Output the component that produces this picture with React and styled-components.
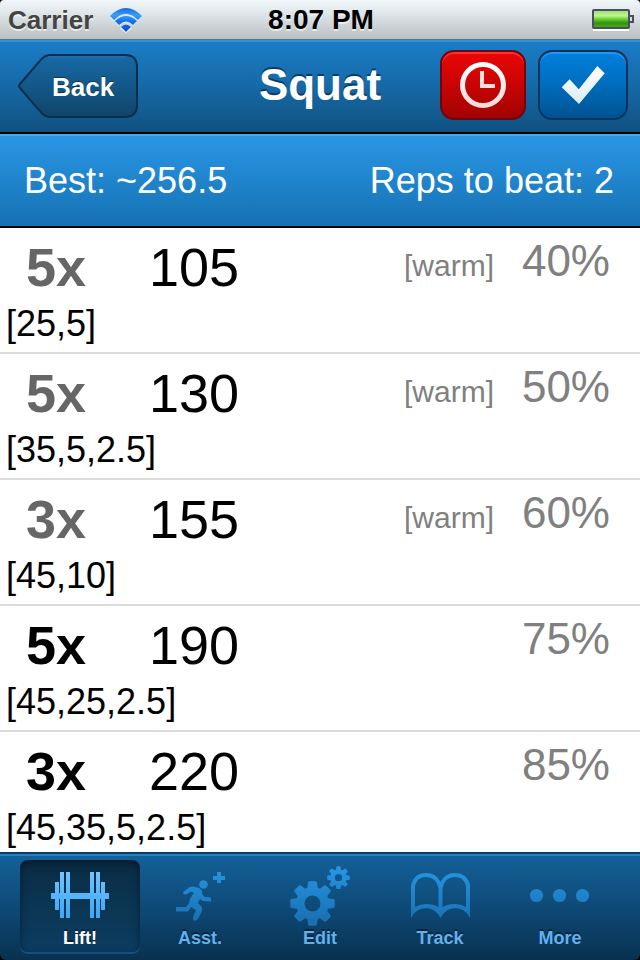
import React from "react";
import styled, { createGlobalStyle } from "styled-components";

const GlobalStyle = createGlobalStyle`
  *, *::before, *::after { box-sizing: border-box; }
  body {
    margin: 0;
    background: #000;
    font-family: "Liberation Sans", Arial, Helvetica, sans-serif;
  }
  button { font: inherit; border: 0; padding: 0; cursor: pointer; }
  svg { display: block; }
`;

const Screen = styled.div`
  display: flex;
  flex-direction: column;
  height: 100vh;
  background: #000;
`;

const StatusBar = styled.header`
  flex: none;
  display: grid;
  grid-template-columns: 1fr auto 1fr;
  align-items: center;
  height: 40px;
  padding: 0 6px 0 8px;
  border-bottom: 1px solid #6d6e70;
  border-radius: 4px 4px 0 0;
  background: linear-gradient(#f1f7fa, #dfe6e9 35%, #b9bec1);
  font-weight: bold;
  text-shadow: 0 2px 0 rgba(255, 255, 255, 0.6);
`;

const Carrier = styled.span`
  display: flex;
  align-items: center;
  gap: 16px;
  color: #444;
  font-size: 26px;
  line-height: 36px;
`;

const Clock = styled.time`
  color: #000;
  font-size: 28px;
  line-height: 36px;
`;

const Battery = styled.span`
  justify-self: end;
`;

const NavBar = styled.nav`
  flex: none;
  display: grid;
  grid-template-columns: 1fr auto 1fr;
  align-items: center;
  height: 94px;
  padding: 0 12px 4px;
  border-top: 2px solid #3192d9;
  border-bottom: 2px solid #000;
  background: linear-gradient(#1a7cc6, #166ba9 45%, #115180);
`;

const Title = styled.h1`
  margin: 0;
  color: #fff;
  font-size: 44px;
  line-height: 52px;
  text-shadow: 0 -2px 0 #0c3d61;
`;

const BackButton = styled.button`
  display: grid;
  justify-self: start;
  margin-left: 6px;
  background: none;
  color: #fff;
  font-size: 26px;
  font-weight: bold;
  text-shadow: 0 -1px 0 #0c3454;

  > * { grid-area: 1 / 1; }
`;

const BackLabel = styled.span`
  align-self: center;
  padding: 4px 20px 0 34px;
  text-align: left;
`;

const Actions = styled.div`
  display: flex;
  justify-self: end;
  gap: 12px;
`;

const tones = {
  red: {
    width: 86,
    border: "#6d0709",
    shine: "#fb3131",
    fill: "linear-gradient(#ea0606, #c80404 50%, #a10202)",
  },
  blue: {
    width: 90,
    border: "#07345a",
    shine: "#2295f0",
    fill: "linear-gradient(#0080df, #006ab9 55%, #005291)",
  },
};

const ActionButton = styled.button`
  display: grid;
  place-items: center;
  width: ${({ $tone }) => tones[$tone].width}px;
  height: 70px;
  border: 2px solid ${({ $tone }) => tones[$tone].border};
  border-radius: 14px;
  background: ${({ $tone }) => tones[$tone].fill};
  box-shadow: inset 0 2px 0 ${({ $tone }) => tones[$tone].shine};
`;

const SummaryBar = styled.section`
  flex: none;
  display: flex;
  align-items: center;
  justify-content: space-between;
  height: 94px;
  padding: 0 26px 0 24px;
  border-top: 2px solid #4aa9ec;
  border-bottom: 2px solid #000;
  background: linear-gradient(#2997e6, #1671b2);
  color: #fff;
  font-size: 36px;
  line-height: 44px;
`;

const SetList = styled.ol`
  flex: 1;
  min-height: 0;
  margin: 0;
  padding: 0;
  overflow-y: auto;
  scrollbar-width: none;
  list-style: none;
  background: #fff;
`;

const SetRow = styled.li`
  height: 126px;
  padding: 8px 30px 0 6px;
  border-bottom: 2px solid #dcdcdc;
`;

const SetMain = styled.div`
  display: flex;
  align-items: flex-start;
  height: 66px;
  padding-left: 20px;
`;

const Reps = styled.strong`
  width: 92px;
  color: ${({ $warm }) => ($warm ? "#666" : "#000")};
  font-size: 54px;
  line-height: 62px;
`;

const Weight = styled.span`
  width: 121px;
  font-size: 54px;
  line-height: 62px;
  text-align: right;
`;

const WarmTag = styled.span`
  margin-left: auto;
  color: #808080;
  font-size: 30px;
  line-height: 60px;
`;

const Percent = styled.span`
  width: 116px;
  color: #808080;
  font-size: 44px;
  line-height: 50px;
  text-align: right;
`;

const Plates = styled.div`
  font-size: 36px;
  line-height: 44px;
`;

const TabBar = styled.nav`
  flex: none;
  display: flex;
  height: 108px;
  padding: 4px 20px 0;
  border-top: 2px solid #0b3c63;
  border-radius: 0 0 6px 6px;
  background: linear-gradient(#146199, #0e4a77 50%, #08314f);
  box-shadow: inset 0 2px 0 #2381c6;
`;

const Tab = styled.button`
  flex: 1;
  display: flex;
  flex-direction: column;
  align-items: center;
  height: 92px;
  margin-top: 2px;
  padding-top: 6px;
  border-radius: 8px;
  background: ${({ $active }) =>
    $active ? "linear-gradient(#0a2b43, #0b3450 40%, #0c3d60)" : "none"};
  box-shadow: ${({ $active }) =>
    $active ? "inset 0 3px 8px rgba(0, 10, 25, 0.5), 0 2px 0 #12507f" : "none"};
  color: ${({ $active }) => ($active ? "#fff" : "#62b1ef")};
  font-size: 18px;
  font-weight: bold;
  line-height: 22px;
  text-shadow: 0 -2px 0 #08243b;
`;

const TabLabel = styled.span`
  margin-top: 1px;
`;

function WifiIcon() {
  return (
    <svg width="34" height="28" viewBox="-1 -2 34 28" aria-label="Wi-Fi" role="img">
      <defs>
        <linearGradient id="wifi" x1="0" y1="0" x2="0" y2="24" gradientUnits="userSpaceOnUse">
          <stop offset="0" stopColor="#1c68d4" />
          <stop offset="0.3" stopColor="#38a0fb" />
          <stop offset="0.55" stopColor="#1474ed" />
          <stop offset="1" stopColor="#0a4ed0" />
        </linearGradient>
      </defs>
      <g fill="none" stroke="#fff" strokeOpacity="0.8">
        <path d="M2 11 Q16 -3 30 11" strokeWidth="5" />
        <path d="M7 16 Q16 8 25 16" strokeWidth="5" />
      </g>
      <path d="M10 20 Q16 15 22 20 L16 25 Z" fill="#fff" />
      <g fill="url(#wifi)">
        <path d="M0 8 Q16 -8 32 8 L28 12 Q16 0 4 12 Z" />
        <path d="M5 13 Q16 3 27 13 L23 17 Q16 10 9 17 Z" />
        <path d="M11 19 Q16 14 21 19 L16 24 Z" />
      </g>
    </svg>
  );
}

function BatteryIcon() {
  return (
    <svg width="42" height="22" viewBox="0 0 42 22" aria-label="Battery full" role="img">
      <defs>
        <linearGradient id="charge" x1="0" y1="0" x2="0" y2="1">
          <stop offset="0" stopColor="#a4e07a" />
          <stop offset="0.3" stopColor="#bdf78c" />
          <stop offset="0.5" stopColor="#6fd03a" />
          <stop offset="0.75" stopColor="#2d9408" />
          <stop offset="1" stopColor="#48a81c" />
        </linearGradient>
      </defs>
      <path d="M1 21 H37" stroke="#fff" strokeWidth="2" />
      <rect x="1" y="1" width="36" height="18" rx="1" fill="#fff" stroke="#4b4d63" strokeWidth="2" />
      <rect x="2" y="2" width="34" height="16" fill="url(#charge)" />
      <path d="M38 7 H41 V13 H38" fill="#d6dade" stroke="#4b4d63" strokeWidth="2" />
    </svg>
  );
}

function BackShape() {
  return (
    <svg width="120" height="66" viewBox="0 -2 120 66" aria-hidden="true">
      <defs>
        <linearGradient id="back" x1="0" y1="0" x2="0" y2="1">
          <stop offset="0" stopColor="#1769a6" />
          <stop offset="0.5" stopColor="#135888" />
          <stop offset="1" stopColor="#104467" />
        </linearGradient>
      </defs>
      <path
        d="M2 34 Q0 32 2 30 L21 8 Q26 1 32 1 H107 Q119 1 119 13 V51 Q119 63 107 63 H32 Q26 63 21 56 Z"
        fill="url(#back)"
        stroke="#0a2f4c"
        strokeWidth="2"
      />
      <path d="M30 3 H108" stroke="#2575b0" strokeWidth="1" />
    </svg>
  );
}

function TimerIcon() {
  return (
    <svg width="46" height="46" viewBox="0 0 46 46" fill="none" aria-hidden="true">
      <defs>
        <linearGradient id="timer" x1="0" y1="0" x2="0" y2="46" gradientUnits="userSpaceOnUse">
          <stop offset="0" stopColor="#fff" />
          <stop offset="1" stopColor="#f9d9d9" />
        </linearGradient>
      </defs>
      <circle cx="23" cy="23" r="20.500" stroke="url(#timer)" strokeWidth="5" />
      <path d="M22 9 V24 H35" stroke="#fbe0e0" strokeWidth="4" />
    </svg>
  );
}

function CheckIcon() {
  return (
    <svg width="44" height="40" viewBox="0 0 44 40" aria-hidden="true">
      <defs>
        <linearGradient id="check" x1="0" y1="0" x2="0" y2="1">
          <stop offset="0" stopColor="#fff" />
          <stop offset="1" stopColor="#dcecf9" />
        </linearGradient>
      </defs>
      <path d="M0.7 22.3 L8.6 14.3 L17.8 24.3 L36.3 1 L43.7 8.3 L18 39 Z" fill="url(#check)" />
    </svg>
  );
}

// Outline of an eight-toothed cog with a round hole.
function cogPath(cx, cy, outer, inner, hole) {
  const teeth = 8;
  const points = [];
  for (let i = 0; i < teeth; i += 1) {
    const a = (i * 2 * Math.PI) / teeth - Math.PI / 2;
    [
      [inner, -0.32],
      [outer - 1, -0.21],
      [outer, -0.16],
      [outer, 0.16],
      [outer - 1, 0.21],
      [inner, 0.32],
    ].forEach(([r, d]) => {
      points.push(`${(cx + r * Math.cos(a + d)).toFixed(2)} ${(cy + r * Math.sin(a + d)).toFixed(2)}`);
    });
  }
  return `M${points.join("L")}Z M${cx - hole} ${cy} a${hole} ${hole} 0 1 0 ${hole * 2} 0 a${hole} ${hole} 0 1 0 ${-hole * 2} 0Z`;
}

function Barbell({ fill }) {
  return (
    <path
      fill={fill}
      d="M3 27H61V33H3Z M7 16H11V44H7Z M12 6H16V52H12Z M18 6H22V52H18Z M42 6H46V52H42Z M48 6H52V52H48Z M53 16H57V44H53Z"
    />
  );
}

function Runner({ fill }) {
  return (
    <g>
      <path fill={fill} d="M49 6H53V10H57V14H53V17H49V14H45V10H49Z" />
      <circle cx="35.500" cy="18.500" r="4.300" fill={fill} />
      <path
        fill={fill}
        d="M15 26 L22 21 Q24 20 27 21 L31 22 Q35 24 34 28 L37 31 L43 31.500 V35.500 L35 35 L32 33 L30 37 L33 40 Q35 42 34 45 L31 51 Q29 56 25 54 V51 L28 44 L23 41 L20 45.500 H8 V41 L18 41 L21 37.500 Q21 33 26 27 L23 25.500 L18 28.500 Q15 29 15 26 Z"
      />
    </g>
  );
}

function Cogs({ fill }) {
  return (
    <path
      fill={fill}
      fillRule="evenodd"
      d={`${cogPath(24.5, 37.5, 22.5, 16.5, 8)} ${cogPath(50.5, 11.7, 11.5, 8.2, 3.6)}`}
    />
  );
}

function Book({ fill }) {
  return (
    <path
      fill={fill}
      fillRule="evenodd"
      d="M3 52V19Q6 7 18 7Q28 7 32.500 16Q37 7 47 7Q59 7 62 19V52Q57 42 47 42Q38 42 32.500 52Q27 42 18 42Q8 42 3 52Z M7 41V20Q9 11 18 11Q28 11 30.500 22V41Q25 38 18 38Q12 38 7 41Z M34.500 41V22Q37 11 47 11Q56 11 58 20V41Q53 38 47 38Q40 38 34.500 41Z"
    />
  );
}

function Dots({ fill }) {
  return (
    <g fill={fill}>
      <circle cx="8.500" cy="29.500" r="6.600" />
      <circle cx="31.500" cy="29.500" r="6.600" />
      <circle cx="54.500" cy="29.500" r="6.600" />
    </g>
  );
}

function TabIcon({ shape: Shape, active }) {
  const id = active ? "tab-on" : "tab-off";
  return (
    <svg width="64" height="60" viewBox="0 0 64 60" aria-hidden="true">
      <defs>
        <linearGradient id={id} x1="0" y1="4" x2="0" y2="56" gradientUnits="userSpaceOnUse">
          <stop offset="0" stopColor={active ? "#76c4ff" : "#2594e2"} />
          <stop offset="1" stopColor={active ? "#36a4f8" : "#1a6fb0"} />
        </linearGradient>
      </defs>
      <Shape fill={`url(#${id})`} />
    </svg>
  );
}

const sets = [
  { reps: "5x", weight: 105, warm: true, percent: "40%", plates: "[25,5]" },
  { reps: "5x", weight: 130, warm: true, percent: "50%", plates: "[35,5,2.5]" },
  { reps: "3x", weight: 155, warm: true, percent: "60%", plates: "[45,10]" },
  { reps: "5x", weight: 190, warm: false, percent: "75%", plates: "[45,25,2.5]" },
  { reps: "3x", weight: 220, warm: false, percent: "85%", plates: "[45,35,5,2.5]" },
];

const tabs = [
  { label: "Lift!", shape: Barbell, active: true },
  { label: "Asst.", shape: Runner },
  { label: "Edit", shape: Cogs },
  { label: "Track", shape: Book },
  { label: "More", shape: Dots },
];

export default function App() {
  return (
    <>
      <GlobalStyle />
      <Screen>
        <StatusBar>
          <Carrier>
            Carrier
            <WifiIcon />
          </Carrier>
          <Clock>8:07 PM</Clock>
          <Battery>
            <BatteryIcon />
          </Battery>
        </StatusBar>

        <NavBar>
          <BackButton type="button">
            <BackShape />
            <BackLabel>Back</BackLabel>
          </BackButton>
          <Title>Squat</Title>
          <Actions>
            <ActionButton type="button" $tone="red" aria-label="Timer">
              <TimerIcon />
            </ActionButton>
            <ActionButton type="button" $tone="blue" aria-label="Done">
              <CheckIcon />
            </ActionButton>
          </Actions>
        </NavBar>

        <SummaryBar>
          <span>Best: ~256.5</span>
          <span>Reps to beat: 2</span>
        </SummaryBar>

        <SetList>
          {sets.map((set) => (
            <SetRow key={set.weight}>
              <SetMain>
                <Reps $warm={set.warm}>{set.reps}</Reps>
                <Weight>{set.weight}</Weight>
                <WarmTag>{set.warm ? "[warm]" : ""}</WarmTag>
                <Percent>{set.percent}</Percent>
              </SetMain>
              <Plates>{set.plates}</Plates>
            </SetRow>
          ))}
        </SetList>

        <TabBar>
          {tabs.map(({ label, shape, active }) => (
            <Tab key={label} type="button" $active={active} aria-current={active ? "page" : undefined}>
              <TabIcon shape={shape} active={active} />
              <TabLabel>{label}</TabLabel>
            </Tab>
          ))}
        </TabBar>
      </Screen>
    </>
  );
}
